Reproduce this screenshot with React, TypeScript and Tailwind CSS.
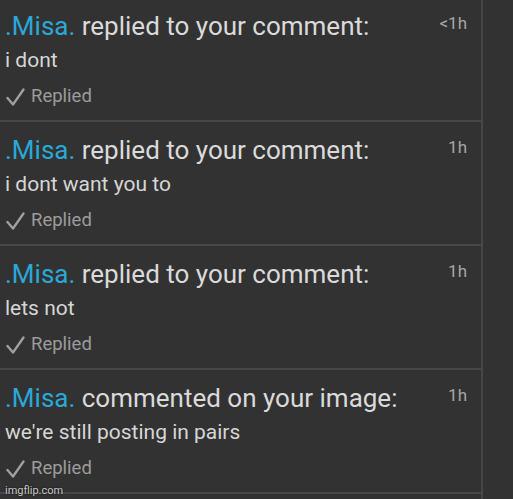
import React from "react";

type Item = { action: string; body: string; time: string };

const items: Item[] = [
  { action: "replied to your comment:", body: "i dont", time: "<1h" },
  { action: "replied to your comment:", body: "i dont want you to", time: "1h" },
  { action: "replied to your comment:", body: "lets not", time: "1h" },
  { action: "commented on your image:", body: "we're still posting in pairs", time: "1h" },
];

function Check() {
  return (
    <svg width="19" height="18" viewBox="0 0 19 18" className="shrink-0">
      <path d="M1.5 10 L7 16.5 L17.5 1.5" fill="none" stroke="#a0a0a0" strokeWidth="2.3" strokeLinecap="round" strokeLinejoin="round" />
    </svg>
  );
}

export default function App() {
  return (
    <div className="relative w-[513px] h-[499px] overflow-hidden bg-[#323232] flex" style={{ fontFamily: "Roboto, 'Liberation Sans', sans-serif" }}>
      <div className="w-[483px] border-r-2 border-[#474747] flex flex-col -mt-[2px]">
        {items.map((it, i) => (
          <div key={i} className="h-[124px] shrink-0 border-b-2 border-[#474747] pt-[13px] pl-[5px] pr-[14px] flex flex-col">
            <div className="flex items-start justify-between h-[30px]">
              <div className="text-[26px] leading-[30px] text-[#dadada] whitespace-nowrap">
                <span className="text-[#2aa8d8]">.Misa.</span> {it.action}
              </div>
              <div className="text-[17px] leading-[24px] text-[#a6a6a6]">{it.time}</div>
            </div>
            <div className="text-[21px] leading-[38px] text-[#d6d6d6] h-[38px]">{it.body}</div>
            <div className="flex items-center gap-[6px] h-[36px] pl-[1px]">
              <Check />
              <span className="text-[18.5px] text-[#9c9c9c]">Replied</span>
            </div>
          </div>
        ))}
      </div>
      <div className="absolute left-[5px] bottom-[3px] text-[11px] leading-none text-[#c8c8c8]" style={{ textShadow: "0 0 2px #000" }}>
        imgflip.com
      </div>
    </div>
  );
}
